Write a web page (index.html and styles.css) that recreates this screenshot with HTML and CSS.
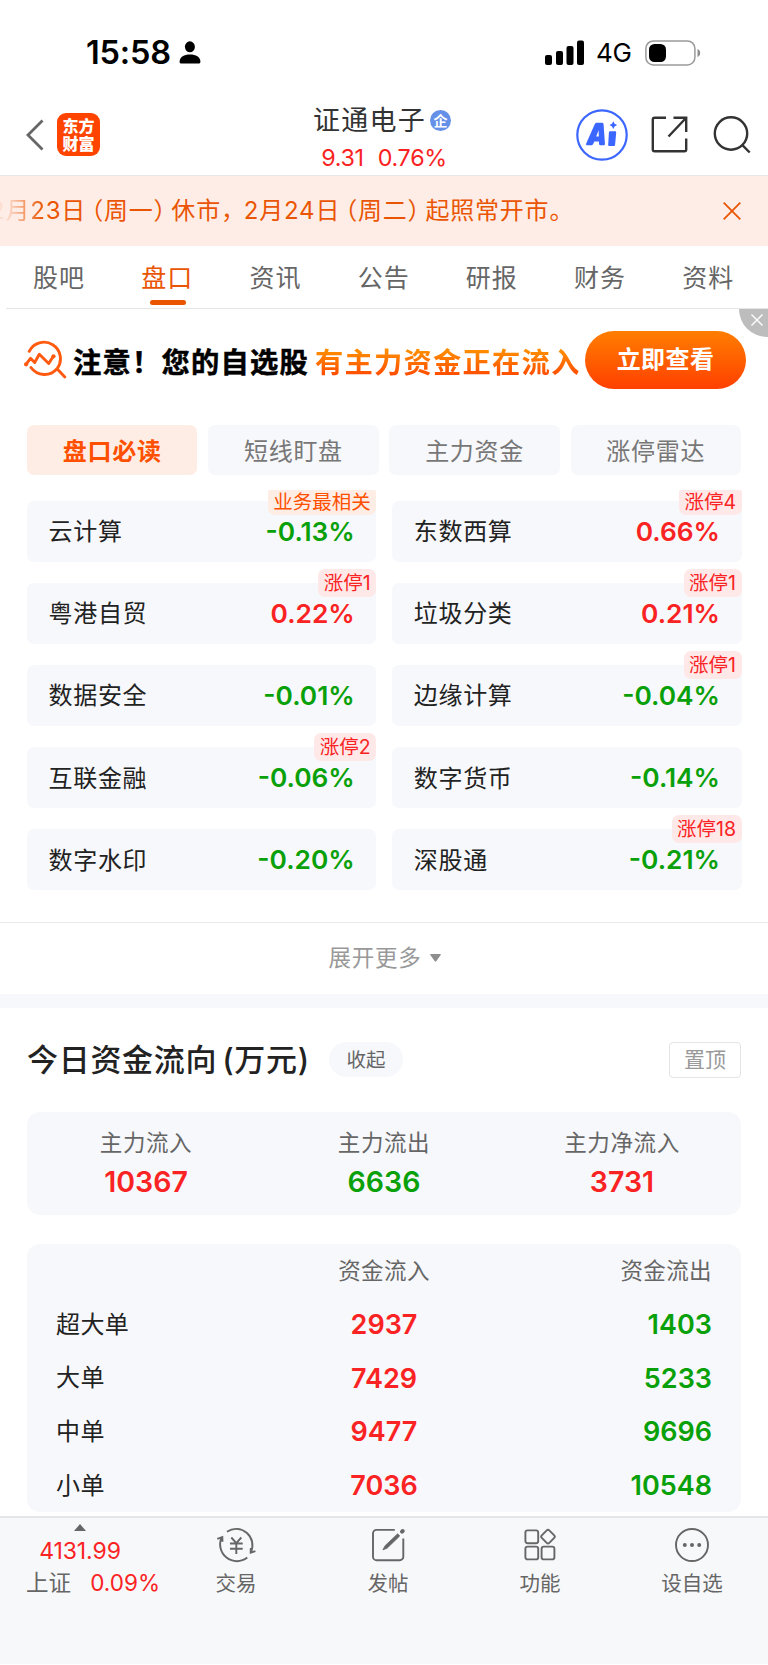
FILE: index.html
```html
<!DOCTYPE html>
<html lang="zh-CN">
<head>
<meta charset="utf-8">
<title>证通电子</title>
<link rel="stylesheet" href="styles.css">
</head>
<body>
<div class="screen">
  <div class="statusbar">
    <div class="status-left">
      <span class="clock">15:58</span>
      <svg class="person" width="22" height="24" viewBox="0 0 22 24"><ellipse cx="10.9" cy="5.8" rx="5" ry="5.5"/><path d="M.6 20.4C.8 16 5 13.6 11 13.6s10.200 2.400 10.400 6.800c0 1.400-.6 2-1.800 2H2.400C1.200 22.400.6 21.800.6 20.400z"/></svg>
    </div>
    <div class="status-right">
      <svg width="40" height="26" viewBox="0 0 40 26"><rect x="0" y="15" width="7" height="10" rx="2"/><rect x="11" y="11" width="7" height="14" rx="2"/><rect x="21.500" y="6" width="7" height="19" rx="2"/><rect x="32" y="0.500" width="7" height="24.500" rx="2"/></svg>
      <span class="net">4G</span>
      <svg class="battery" width="56" height="26" viewBox="0 0 56 26"><rect x=".9" y=".9" width="49" height="24" rx="7.500" fill="none" stroke="#9a9a9a" stroke-width="1.500"/><rect x="4" y="4" width="17" height="18" rx="5.500"/><path d="M52.500 9c3.600 1.200 3.600 6.800 0 8z" fill="#8e8e8e"/></svg>
    </div>
  </div>

  <header class="header">
    <div class="header-side">
      <svg class="back" width="18" height="32" viewBox="0 0 18 32"><path d="M16.500 1.500L2 16l14.500 14.500"/></svg>
      <div class="logo"><span>东方</span><span>财富</span></div>
    </div>
    <div class="header-center">
      <div class="stock-name">证通电子<span class="qi">企</span></div>
      <div class="stock-quote"><span>9.31</span><span>0.76%</span></div>
    </div>
    <div class="header-actions">
      <svg width="52" height="52" viewBox="0 0 52 52"><circle cx="26" cy="26" r="24.700" fill="#fff" stroke="#3b66ff" stroke-width="2.200"/><path fill="#3b66ff" fill-rule="evenodd" d="M10.200 34.500L18.600 15.400C19.200 14.100 19.900 13.700 21.200 13.700H25.600C27 13.700 27.500 14.300 27.600 15.600L28.900 34.500C29 35.800 28.600 36.300 27.400 36.300H24.900C23.500 36.300 23 35.700 23 34.500V32.400H18.300L17.300 34.700C16.800 35.900 16.100 36.300 14.900 36.300H11.500C10.200 36.300 9.700 35.700 10.200 34.500zM20.200 27.600h2.600l-.2-6.300zM34.300 22.200H39c.9 0 1.300.5 1.200 1.400l-1.100 12.100c-.1.900-.6 1.300-1.500 1.300h-4.200c-.9 0-1.300-.5-1.200-1.300l.7-12.100c.1-.9.500-1.400 1.400-1.400zM37.300 12.200l1.300 2.600 2.500 1.300-2.500 1.300-1.300 2.600-1.300-2.600-2.500-1.300 2.500-1.300z"/></svg>
      <svg class="line-icon share" width="38" height="38" viewBox="0 0 38 38"><path d="M15 1.800H3.600c-1.100 0-1.800.7-1.800 1.800v29.800c0 1.100.7 1.800 1.800 1.800h29.800c1.100 0 1.800-.7 1.800-1.800V22.500M22.500 1.800h12.700V16M35 2L17.500 20.500"/></svg>
      <svg class="line-icon" width="38" height="38" viewBox="0 0 38 38"><circle cx="18" cy="17.500" r="16.200"/><path d="M29.400 29.200l7.300 7.300"/></svg>
    </div>
  </header>

  <div class="notice">
    <div class="notice-text"><span class="fade">2月2</span>3日<span class="po">（</span>周一<span class="pc">）</span>休市<span class="comma">，</span>2月24日<span class="po">（</span>周二<span class="pc">）</span>起照常开市。</div>
    <svg class="notice-close" width="18" height="18" viewBox="0 0 18 18"><path d="M.7.700l16.600 16.600M17.300.7L.7 17.300"/></svg>
  </div>

  <nav class="tabs">
    <span>股吧</span><span class="on">盘口</span><span>资讯</span><span>公告</span><span>研报</span><span>财务</span><span>资料</span>
  </nav>

  <div class="promo">
    <svg class="promo-icon" width="44" height="42" viewBox="0 0 44 42"><path d="M5.200 12.300A16.500 16.500 0 1 1 33 29.800 16.500 16.500 0 0 1 7 28.500M33 29.800l7.800 8.200M2 25.300L6.500 19.300l4.200 4.200 4.600-8.300 9.400 9.300 4.500-7" fill="none" stroke="#ff5a0f" stroke-width="2.900" stroke-linecap="round" stroke-linejoin="round"/><circle cx="2.100" cy="25.300" r="2.100" fill="#ff5a0f"/><circle cx="29.500" cy="17.300" r="2.100" fill="#ff5a0f"/></svg>
    <span class="promo-a">注意！您的自选股</span><span class="promo-b">有主力资金正在流入</span>
    <span class="promo-btn">立即查看</span>
    <div class="promo-x"><svg width="12" height="12" viewBox="0 0 12 12"><path d="M.5.500l11 11M11.500.5l-11 11"/></svg></div>
  </div>

  <div class="pills">
    <span class="on">盘口必读</span><span>短线盯盘</span><span>主力资金</span><span>涨停雷达</span>
  </div>

  <div class="cards">
    <div class="card"><span>云计算</span><b class="dn">-0.13%</b><i class="tag first biz">业务最相关</i></div>
    <div class="card"><span>东数西算</span><b class="up">0.66%</b><i class="tag first">涨停4</i></div>
    <div class="card"><span>粤港自贸</span><b class="up">0.22%</b><i class="tag">涨停1</i></div>
    <div class="card"><span>垃圾分类</span><b class="up">0.21%</b><i class="tag">涨停1</i></div>
    <div class="card"><span>数据安全</span><b class="dn">-0.01%</b></div>
    <div class="card"><span>边缘计算</span><b class="dn">-0.04%</b><i class="tag">涨停1</i></div>
    <div class="card"><span>互联金融</span><b class="dn">-0.06%</b><i class="tag">涨停2</i></div>
    <div class="card"><span>数字货币</span><b class="dn">-0.14%</b></div>
    <div class="card"><span>数字水印</span><b class="dn">-0.20%</b></div>
    <div class="card"><span>深股通</span><b class="dn">-0.21%</b><i class="tag">涨停18</i></div>
  </div>

  <div class="more"><span>展开更多</span><svg width="11" height="8" viewBox="0 0 11 8"><path d="M.8 0h9.400c.7 0 .9.500.5 1L6.200 7.300c-.4.600-1 .6-1.400 0L.3 1C-.1.500.1 0 .8 0z" fill="#8e8e8e"/></svg></div>

  <section class="flow">
    <div class="flow-head">
      <h2>今日资金流向<span class="paren">(</span>万元<span>)</span></h2>
      <span class="collapse">收起</span>
      <span class="pin">置顶</span>
    </div>
    <div class="summary">
      <div><span>主力流入</span><b class="up">10367</b></div>
      <div><span>主力流出</span><b class="dn">6636</b></div>
      <div><span>主力净流入</span><b class="up">3731</b></div>
    </div>
    <div class="table">
      <div class="tr th"><span></span><span>资金流入</span><span>资金流出</span></div>
      <div class="tr"><span>超大单</span><b class="up">2937</b><b class="dn">1403</b></div>
      <div class="tr"><span>大单</span><b class="up">7429</b><b class="dn">5233</b></div>
      <div class="tr"><span>中单</span><b class="up">9477</b><b class="dn">9696</b></div>
      <div class="tr"><span>小单</span><b class="up">7036</b><b class="dn">10548</b></div>
    </div>
  </section>

  <footer class="bottombar">
    <div class="index">
      <svg width="12" height="7" viewBox="0 0 12 7"><path d="M6 0l6 7H0z" fill="#666"/></svg>
      <div class="index-val">4131.99</div>
      <div class="index-row"><span>上证</span><em>0.09%</em></div>
    </div>
    <div class="item">
      <svg width="40" height="36" viewBox="0 0 40 36"><path d="M11 4.700A16.300 16.300 0 0 1 35 24.900M31.300 30.600A16.800 16.800 0 0 1 5.700 10.300M1.300 11.800l5-1.700.2 4.600M39.400 24.100L34.700 25.700l.1-4.700M15.300 10.500l5 5.600 5-5.600M20.300 16.100v10.900M14 16.500h12.700M14 21.700h12.700"/></svg>
      <span>交易</span>
    </div>
    <div class="item">
      <svg width="36" height="36" viewBox="0 0 36 36"><path d="M24.800 2.900H6.500A3.500 3.500 0 0 0 3 6.400v23.300a3.500 3.500 0 0 0 3.500 3.500h23.300a3.500 3.500 0 0 0 3.500-3.500V11.500"/><path d="M12.900 22.900l2.200-4.200L27.700 6.800l2 2.200-12.400 12z" fill="#666" stroke-width=".8"/><path d="M32 4.700l.7-.7" stroke-width="4" stroke-linecap="round"/></svg>
      <span>发帖</span>
    </div>
    <div class="item">
      <svg width="32" height="36" viewBox="0 0 32 36"><rect x="1.400" y="3.400" width="12.800" height="12.800" rx="2.200"/><rect x="1.400" y="19.600" width="12.800" height="12.800" rx="2.200"/><rect x="17.600" y="19.600" width="12.800" height="12.800" rx="2.200"/><rect x="18.700" y="4.300" width="10.600" height="10.600" rx="1.800" transform="rotate(45 24 9.600)"/></svg>
      <span>功能</span>
    </div>
    <div class="item">
      <svg width="36" height="36" viewBox="0 0 36 36"><circle cx="18" cy="18" r="16"/><g fill="#666" stroke="none"><circle cx="10.800" cy="18" r="2"/><circle cx="18" cy="18" r="2"/><circle cx="25.200" cy="18" r="2"/></g></svg>
      <span>设自选</span>
    </div>
  </footer>
</div>
</body>
</html>
```
FILE: styles.css
```css
* { box-sizing: border-box; }
body {
  margin: 0;
  background: #fff;
  font-family: Inter, "Noto Sans CJK SC", sans-serif;
  color: #222;
  line-height: 1;
}
svg { display: block; flex: none; }
b, i, em, h2 { font-style: normal; margin: 0; }
.up { color: #fa2323; }
.dn { color: #0aa00a; }
.screen { width: 768px; height: 1665px; overflow: hidden; display: flex; flex-direction: column; }
.screen > * { flex: none; }

.statusbar { height: 100px; padding: 5px 67px 0 86px; display: flex; align-items: center; justify-content: space-between; color: #000; }
.status-left, .status-right { display: flex; align-items: center; }
.clock { font-size: 32.500px; font-weight: 600; width: 93px; padding-top: 2px; letter-spacing: -.2px; white-space: nowrap; }
.net { font-size: 26px; margin-left: 11px; width: 37px; padding-top: 1px; letter-spacing: -.3px; }
.battery { margin-left: 12px; }

.header { height: 76px; border-bottom: 1px solid #e8e8ea; padding: 0 17px; display: grid; grid-template-columns: 1fr 200px 1fr; }
.header-side, .header-actions { height: 70px; display: flex; align-items: center; padding-bottom: 1px; }
.header-side { padding-left: 9px; }
.header-actions { justify-content: flex-end; }
.back path { fill: none; stroke: #666; stroke-width: 2.800; }
.logo { width: 43px; height: 43px; margin-left: 13px; border-radius: 9px; background: #ff4400; color: #fff; font-size: 16px; font-weight: 900; display: flex; flex-direction: column; align-items: center; justify-content: center; gap: 2px; }
.header-center { padding-top: 5px; text-align: center; }
.stock-name { height: 31px; padding-right: 4px; display: flex; align-items: center; justify-content: center; font-size: 27px; letter-spacing: 1.200px; color: #333; }
.qi { width: 21px; height: 21px; margin-left: 4px; border-radius: 50%; background: #6590e8; color: #fff; font-size: 14px; font-weight: 700; letter-spacing: 0; display: flex; align-items: center; justify-content: center; }
.stock-quote { height: 43px; display: flex; justify-content: center; align-items: center; gap: 14px; font-size: 23.300px; color: #fa2323; letter-spacing: -.3px; }
.line-icon { fill: none; stroke: #333; stroke-width: 2.400; }
.share { margin: 0 24px 0 23px; }

.notice { height: 70px; background: #feede6; display: flex; align-items: center; justify-content: space-between; padding-right: 27px; color: #ea5504; }
.notice-text { font-size: 24px; letter-spacing: .8px; white-space: nowrap; margin-left: -10px; line-height: 34px; }
.fade { background: linear-gradient(90deg, rgba(234,85,4,.1) 30%, #ea5504 95%); -webkit-background-clip: text; background-clip: text; color: transparent; }
.po, .pc { font-feature-settings: "halt"; }
.po { margin-left: 5px; }
.pc { margin-right: 5px; }
.comma { letter-spacing: -1.200px; }
.notice-close path { fill: none; stroke: #ea5504; stroke-width: 1.800; }

.tabs { height: 63px; margin-left: 6px; border-bottom: 1px solid #e6e6e6; display: flex; }
.tabs span { width: 108.200px; height: 62px; padding-top: 19px; line-height: 27px; font-size: 25px; letter-spacing: 1px; text-align: center; color: #666; position: relative; left: -1px; }
.tabs .on { color: #ea5504; }
.tabs .on::after { content: ""; position: absolute; left: 37px; bottom: 3px; width: 36px; height: 5px; border-radius: 3px; background: #ea5504; }

.promo { height: 116px; padding: 0 0 14px 24px; display: flex; align-items: center; position: relative; }
.promo-a, .promo-b { font-size: 28.300px; font-weight: 700; letter-spacing: 1.200px; line-height: 40px; white-space: nowrap; margin-top: 5px; }
.promo-a { margin-left: 5px; width: 242px; color: #000; -webkit-text-stroke: .5px #000; }
.promo-b { width: 270px; background: linear-gradient(180deg, #ff8c00 20%, #ff4d00 80%); -webkit-background-clip: text; background-clip: text; color: transparent; }
.promo-btn { width: 161px; height: 58px; border-radius: 29px; background: linear-gradient(180deg, #ff7e00, #ff4000); color: #fff; font-size: 24px; font-weight: 700; letter-spacing: .4px; display: flex; align-items: center; justify-content: center; }
.promo-x { position: absolute; right: 0; top: 0; width: 29px; height: 28px; border-bottom-left-radius: 29px; background: #bdbdbd; padding: 5px 0 0 12px; }
.promo-x path { fill: none; stroke: #fff; stroke-width: 1.400; }

.pills { margin: 0 27px; display: grid; grid-template-columns: repeat(4, 1fr); gap: 10.700px; }
.pills span { height: 50px; line-height: 50px; border-radius: 7px; background: #f7f8fb; color: #777; font-size: 24px; letter-spacing: .7px; text-align: center; padding-top: 2px; }
.pills .on { background: #feede5; color: #ff5000; font-weight: 700; }

.cards { margin: 26px 26.500px 0 27px; display: grid; grid-template-columns: 1fr 1fr; column-gap: 16px; row-gap: 21.600px; }
.card { height: 60.500px; padding: 2px 21.500px 0; border-radius: 7px; background: #f7f8fb; display: flex; align-items: center; justify-content: space-between; position: relative; font-size: 24px; letter-spacing: .7px; }
.card b { font-size: 26.300px; font-weight: 600; letter-spacing: 0; }
.tag { position: absolute; right: 0; top: -14px; height: 28px; line-height: 29px; padding: 0 5.500px; border-radius: 7px; background: #fee8e8; color: #fa2323; font-size: 19.500px; letter-spacing: 0; }
.first { top: -11.500px; height: 25.500px; line-height: 24px; border-radius: 2px 2px 7px 7px; }
.biz { background: #feede5; color: #ff5000; }

.more { height: 72px; margin-top: 32px; border-top: 1px solid #ebebed; display: flex; align-items: center; justify-content: center; gap: 8px; padding-left: 1px; font-size: 22.500px; letter-spacing: .8px; color: #999; }

.flow { border-top: 14px solid #f7f8fb; height: 522px; padding: 34px 27px 0; }
.flow-head { height: 36px; display: flex; align-items: center; }
h2 { font-size: 31px; font-weight: 500; letter-spacing: .7px; white-space: nowrap; width: 302px; }
.paren { margin-left: 5px; }
.collapse { width: 74px; height: 35px; line-height: 36px; border-radius: 18px; background: #f7f8fb; color: #666; text-align: center; font-size: 19.500px; }
.pin { margin-left: auto; width: 72px; height: 36px; line-height: 34px; border: 1px solid #e4e4e6; border-radius: 4px; color: #999; text-align: center; font-size: 21px; }
.summary { margin-top: 34px; height: 103px; border-radius: 13px; background: #f7f8fb; display: grid; grid-template-columns: repeat(3, 1fr); text-align: center; }
.summary div { display: flex; flex-direction: column; padding-top: 15px; }
.summary span { line-height: 32px; font-size: 22.500px; letter-spacing: .6px; color: #666; }
.summary b { line-height: 46px; font-size: 28.500px; font-weight: 600; }
.table { margin-top: 29px; height: 268px; padding-top: .5px; border-radius: 13px; background: #f7f8fb; }
.tr { height: 53.600px; padding: 0 29px; display: grid; grid-template-columns: 1fr 1fr 1fr; align-items: center; font-size: 24px; letter-spacing: .4px; }
.tr > :nth-child(2) { text-align: center; }
.tr > :nth-child(3) { text-align: right; }
.tr b { font-size: 27px; font-weight: 600; letter-spacing: 0; }
.th { font-size: 22.500px; color: #666; }

.bottombar { height: 148px; border-top: 2px solid #e4e6e9; background: #f7f8fa; display: flex; color: #666; }
.index { width: 160px; padding-top: 6px; display: flex; flex-direction: column; align-items: center; }
.index-val { margin-top: 5px; line-height: 31px; font-size: 23px; color: #fa2323; letter-spacing: -.1px; }
.index-row { align-self: stretch; display: flex; justify-content: space-between; padding: 0 0 0 26px; line-height: 32px; font-size: 22.500px; }
.index-row em { color: #fa2323; }
.item { width: 152px; padding-top: 9px; display: flex; flex-direction: column; align-items: center; font-size: 20.500px; }
.item svg { fill: none; stroke: #666; stroke-width: 1.900; }
.item span { margin-top: 5px; line-height: 32px; }
```
